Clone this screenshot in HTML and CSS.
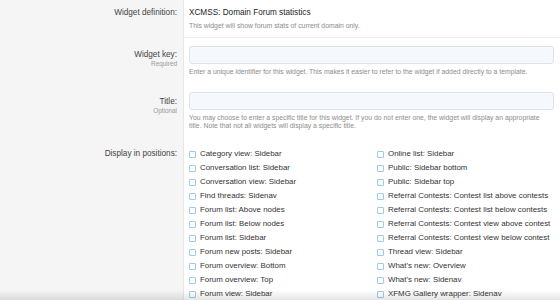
FILE: index.html
```html
<!DOCTYPE html>
<html lang="en">
<head>
    <meta charset="UTF-8">
    <title>Widget options</title>
    <link rel="stylesheet" href="styles.css">
</head>
<body>

<div class="form">
    <div class="form-row">
        <div class="row-label">Widget definition:</div>
        <div class="row-input row-sep">
            <div class="value">XCMSS: Domain Forum statistics</div>
            <div class="hint">This widget will show forum stats of current domain only.</div>
        </div>
    </div>

    <div class="form-row">
        <div class="row-label label-key">
            Widget key:
            <span class="label-hint">Required</span>
        </div>
        <div class="row-input">
            <input type="text" class="input">
            <div class="hint">Enter a unique identifier for this widget. This makes it easier to refer to the widget if added directly to a template.</div>
        </div>
    </div>

    <div class="form-row">
        <div class="row-label label-title">
            Title:
            <span class="label-hint">Optional</span>
        </div>
        <div class="row-input">
            <input type="text" class="input">
            <div class="hint hint-narrow">You may choose to enter a specific title for this widget. If you do not enter one, the widget will display an appropriate title. Note that not all widgets will display a specific title.</div>
        </div>
    </div>

    <div class="form-row">
        <div class="row-label label-positions">Display in positions:</div>
        <div class="row-input positions">
            <ul class="check-col">
                <li><span class="check"></span>Category view: Sidebar</li>
                <li><span class="check"></span>Conversation list: Sidebar</li>
                <li><span class="check"></span>Conversation view: Sidebar</li>
                <li><span class="check"></span>Find threads: Sidenav</li>
                <li><span class="check"></span>Forum list: Above nodes</li>
                <li><span class="check"></span>Forum list: Below nodes</li>
                <li><span class="check"></span>Forum list: Sidebar</li>
                <li><span class="check"></span>Forum new posts: Sidebar</li>
                <li><span class="check"></span>Forum overview: Bottom</li>
                <li><span class="check"></span>Forum overview: Top</li>
                <li><span class="check"></span>Forum view: Sidebar</li>
            </ul>
            <ul class="check-col">
                <li><span class="check"></span>Online list: Sidebar</li>
                <li><span class="check"></span>Public: Sidebar bottom</li>
                <li><span class="check"></span>Public: Sidebar top</li>
                <li><span class="check"></span>Referral Contests: Contest list above contests</li>
                <li><span class="check"></span>Referral Contests: Contest list below contests</li>
                <li><span class="check"></span>Referral Contests: Contest view above contest</li>
                <li><span class="check"></span>Referral Contests: Contest view below contest</li>
                <li><span class="check"></span>Thread view: Sidebar</li>
                <li><span class="check"></span>What's new: Overview</li>
                <li><span class="check"></span>What's new: Sidenav</li>
                <li><span class="check"></span>XFMG Gallery wrapper: Sidenav</li>
            </ul>
        </div>
    </div>
</div>

<!-- тень нижней панели -->
<div class="bottom-shade"></div>

</body>
</html>
```

FILE: styles.css
```css
html, body {
    overflow: hidden;
}
body {
    margin: 0;
    background-color: #fff;
    font-family: "Liberation Sans", Arial, sans-serif;
    font-size: 8.2px;
    line-height: 10px;
    color: #222;
}

.form-row {
    display: flex;
}
.row-label {
    width: 177px;
    flex-shrink: 0;
    padding: 8px 6px 0 0;
    text-align: right;
    background-color: #f5f5f5;
    border-right: 1px solid #e6e6e6;
    color: #444;
}
.label-key {
    padding-top: 12px;
}
.label-title {
    padding-top: 13px;
}
.label-positions {
    padding-top: 11px;
}
.label-hint {
    display: block;
    font-size: 6.4px;
    line-height: 8px;
    color: #9a9a9a;
}

.row-input {
    flex: 1;
    padding: 8px 6px 8px 5px;
}
.row-sep {
    padding-bottom: 7px;
    border-bottom: 1px solid #ececec;
}
.value {
    color: #1d1d1d;
}
.hint {
    margin-top: 4px;
    font-size: 6.85px;
    line-height: 8px;
    color: #8c8c8c;
}
.hint-narrow {
    max-width: 354px;
}

.input {
    display: block;
    box-sizing: border-box;
    width: 100%;
    height: 18px;
    margin: 0;
    padding: 0 4px;
    border: 1px solid #dfe3e7;
    border-radius: 3px;
    background-color: #f5f9fd;
}

.positions {
    display: flex;
    padding-top: 9px;
    padding-bottom: 0;
}
.check-col {
    width: 188px;
    margin: 0;
    padding: 0;
    list-style: none;
}
.check-col li {
    display: flex;
    align-items: center;
    height: 14px;
    white-space: nowrap;
    color: #333;
    font-size: 7.9px;
}
.check {
    box-sizing: border-box;
    width: 7px;
    height: 7px;
    margin-right: 4px;
    border: 1px solid #9ccbe8;
    border-radius: 1px;
    background-color: #fff;
}

.bottom-shade {
    position: fixed;
    left: 0;
    right: 0;
    bottom: 0;
    height: 10px;
    background: linear-gradient(rgba(0, 0, 0, 0), rgba(0, 0, 0, 0.1));
}
```
